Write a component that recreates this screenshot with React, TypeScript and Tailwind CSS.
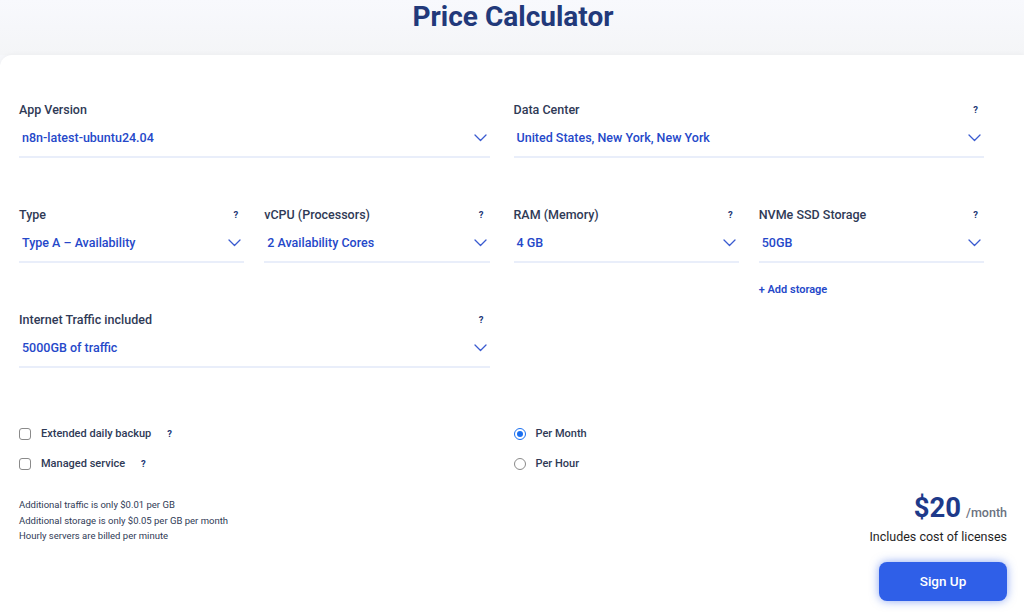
import React from "react";

const font = { fontFamily: "Roboto, 'Liberation Sans', Arial, sans-serif" };

function Chevron() {
  return (
    <svg width="13" height="8" viewBox="0 0 13 8" fill="none">
      <polyline points="1,1 6.5,6.5 12,1" stroke="#3a5bd0" strokeWidth="1.3" strokeLinecap="round" strokeLinejoin="round" />
    </svg>
  );
}

function Q() {
  return <span className="text-[9.5px] font-bold text-[#233876] leading-none">?</span>;
}

function Field({ label, value, help = true }: { label: string; value: string; help?: boolean }) {
  return (
    <div className="flex flex-col">
      <div className="flex items-center justify-between h-5 pr-[6px]">
        <span className="text-[12.5px] font-medium text-[#2f3a56] leading-5">{label}</span>
        {help ? <Q /> : null}
      </div>
      <div className="mt-[8px] flex items-center justify-between pl-[3px] pr-[3px] pb-[8px] border-b-2 border-[#e9eefa]">
        <span className="text-[12.5px] font-medium text-[#2548c9] leading-5">{value}</span>
        <Chevron />
      </div>
    </div>
  );
}

function Checkbox({ label }: { label: string }) {
  return (
    <div className="flex items-center h-4">
      <span className="w-[12px] h-[12px] rounded-[3px] border-[1.5px] border-[#8a8a8a] bg-white" />
      <span className="ml-[10px] text-[11px] font-medium text-[#2f3a56] leading-4">{label}</span>
    </div>
  );
}

function Radio({ label, checked }: { label: string; checked?: boolean }) {
  return (
    <div className="flex items-center h-4">
      {checked ? (
        <span className="w-[12px] h-[12px] rounded-full border-[1.5px] border-[#1a6ff0] flex items-center justify-center">
          <span className="w-[6px] h-[6px] rounded-full bg-[#1a6ff0]" />
        </span>
      ) : (
        <span className="w-[12px] h-[12px] rounded-full border-[1.5px] border-[#8a8a8a]" />
      )}
      <span className="ml-[10px] text-[11px] font-medium text-[#2f3a56] leading-4">{label}</span>
    </div>
  );
}

export default function App() {
  return (
    <div style={font} className="w-[1024px] h-[612px] overflow-hidden bg-[#f6f7fa] flex flex-col">
      <div className="h-[55px] shrink-0 bg-gradient-to-b from-[#f8f9fd] to-[#f4f5f7] flex justify-center">
        <h1 className="text-[28px] font-bold text-[#22397a] leading-[34px] mt-0 ml-[2px]">Price Calculator</h1>
      </div>
      <div className="flex-1 bg-white rounded-tl-[12px] shadow-[0_-1px_4px_rgba(0,0,0,0.03)] pl-[19px] pr-[17px] pt-[45px]">
        <div className="mr-[23px]">
          <div className="grid grid-cols-2 gap-x-[24px]">
            <Field label="App Version" value="n8n-latest-ubuntu24.04" help={false} />
            <Field label="Data Center" value="United States, New York, New York" />
          </div>
          <div className="grid grid-cols-2 gap-x-[24px] mt-[47px]">
            <div className="grid grid-cols-2 gap-x-[20px]">
              <Field label="Type" value="Type A – Availability" />
              <Field label="vCPU (Processors)" value="2 Availability Cores" />
            </div>
            <div className="grid grid-cols-2 gap-x-[20px]">
              <Field label="RAM (Memory)" value="4 GB" />
              <div className="flex flex-col">
                <Field label="NVMe SSD Storage" value="50GB" />
                <span className="mt-[19px] text-[11px] font-semibold text-[#2548c9] leading-4">+ Add storage</span>
              </div>
            </div>
          </div>
          <div className="grid grid-cols-2 gap-x-[24px] mt-[12px]">
            <Field label="Internet Traffic included" value="5000GB of traffic" />
            <div />
          </div>
          <div className="grid grid-cols-2 gap-x-[24px] mt-[58px]">
            <div className="flex flex-col gap-[14px]">
              <div className="flex items-center h-4 leading-none">
                <Checkbox label="Extended daily backup" />
                <span className="ml-[16px] flex items-center"><Q /></span>
              </div>
              <div className="flex items-center h-4 leading-none">
                <Checkbox label="Managed service" />
                <span className="ml-[16px] flex items-center"><Q /></span>
              </div>
            </div>
            <div className="flex flex-col gap-[14px]">
              <Radio label="Per Month" checked />
              <Radio label="Per Hour" />
            </div>
          </div>
        </div>
        <div className="flex justify-between items-start mt-[19px]">
          <div className="mt-[6px] text-[9.5px] text-[#2f3a56] leading-[15.5px]">
            <div>Additional traffic is only $0.01 per GB</div>
            <div>Additional storage is only $0.05 per GB per month</div>
            <div>Hourly servers are billed per minute</div>
          </div>
          <div className="flex flex-col items-end">
            <div className="flex items-baseline h-[34px]">
              <span className="text-[27.5px] font-bold text-[#1e3a8a] leading-[34px]">$20</span>
              <span className="ml-[5px] text-[12.5px] font-medium text-[#6b7280]">/month</span>
            </div>
            <div className="text-[12.5px] text-[#1f1f1f] leading-[18px] mt-[3px]">Includes cost of licenses</div>
            <button className="mt-[16px] w-[128px] h-[39px] rounded-[8px] bg-[#2f5fe8] text-white text-[13.5px] font-medium shadow-[0_0_10px_rgba(47,95,232,0.55)]">
              Sign Up
            </button>
          </div>
        </div>
      </div>
    </div>
  );
}
